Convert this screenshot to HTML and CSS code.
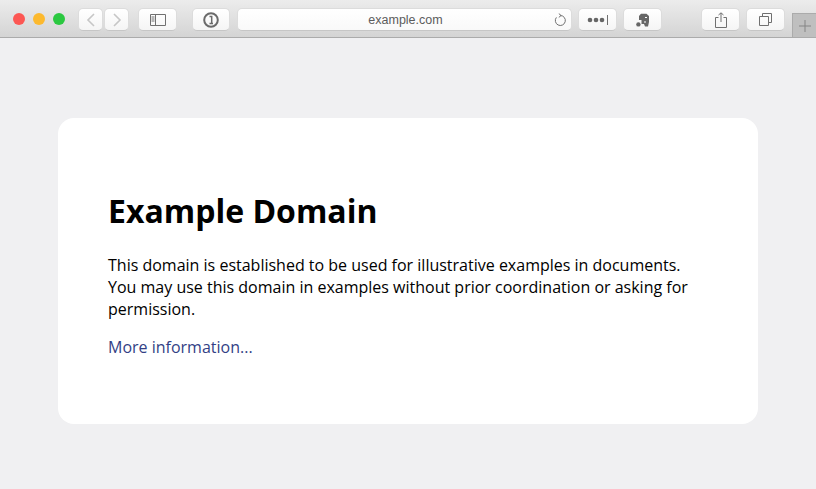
FILE: index.html
```html
<!DOCTYPE html>
<html lang="en">
<head>
  <meta charset="UTF-8" />
  <title>Example Domain</title>
  <link rel="stylesheet" href="styles.css">
</head>
<body>
  <header class="toolbar">
    <div class="lights">
      <span class="light red"></span>
      <span class="light yellow"></span>
      <span class="light green"></span>
    </div>

    <div class="nav-pair">
      <button class="tool nav-btn" type="button" aria-label="Back">
        <svg width="10" height="16" viewBox="0 0 10 16"><path d="M8 2 2 8l6 6" class="faint"/></svg>
      </button>
      <button class="tool nav-btn" type="button" aria-label="Forward">
        <svg width="10" height="16" viewBox="0 0 10 16"><path d="m2 2 6 6-6 6" class="faint"/></svg>
      </button>
    </div>

    <button class="tool sidebar-btn" type="button" aria-label="Sidebar">
      <svg width="16" height="12" viewBox="0 0 16 12"><path d="M.5.5h15v11H.5zM5.5.5v11M1.5 3h3M1.5 5h3M1.5 7h3" class="line"/></svg>
    </button>

    <button class="tool key-btn" type="button" aria-label="Password manager">
      <svg width="16" height="16" viewBox="0 0 16 16"><circle cx="8" cy="8" r="6.8" class="thick"/><path d="M6.5 4.5h2.2v7M6.5 11.5h3.5" class="mid"/></svg>
    </button>

    <div class="address">
      <span class="address-text">example.com</span>
      <svg class="reload" width="14" height="14" viewBox="0 0 14 14"><path d="M7.5 2.5A5 5 0 1 1 3.4 4.4" class="line"/><path d="M5.8.6l2.3 1.9-2.3 1.9" class="line"/></svg>
    </div>

    <button class="tool dots-btn" type="button" aria-label="Extensions">
      <svg width="22" height="10" viewBox="0 0 22 10"><circle cx="3" cy="5" r="2.3" class="fill"/><circle cx="9" cy="5" r="2.3" class="fill"/><circle cx="15" cy="5" r="2.3" class="fill"/><path d="M20.5 0v10" class="line"/></svg>
    </button>

    <button class="tool note-btn" type="button" aria-label="Evernote">
      <svg width="14" height="14" viewBox="0 0 14 14"><path d="M3 3 5 .8h5.5L13 3v6l-1 4.4H9L8 11H5.5V7H3z" class="fill"/><path d="M9 4.5h2M8 9h2" class="cut"/><circle cx="2.4" cy="11.4" r="2.2" class="fill"/></svg>
    </button>

    <button class="tool share-btn" type="button" aria-label="Share">
      <svg width="12" height="16" viewBox="0 0 12 16"><path d="M3.5 5.5H.5v10h11v-10h-3M6 10V1M3.5 3 6 .8 8.5 3" class="line"/></svg>
    </button>

    <button class="tool tabs-btn" type="button" aria-label="Show tabs">
      <svg width="13" height="13" viewBox="0 0 13 13"><path d="M.5 3.5h9v9h-9zM3.5 3.5v-3h9v9h-3" class="line"/></svg>
    </button>

    <div class="new-tab" aria-label="New tab">
      <svg width="12" height="12" viewBox="0 0 12 12"><path d="M6 0v12M0 6h12" class="plus"/></svg>
    </div>
  </header>

  <main class="page">
    <section class="card">
      <h1>Example Domain</h1>
      <p class="intro">This domain is established to be used for illustrative examples in documents. You may use this domain in examples without prior coordination or asking for permission.</p>
      <p><a href="#">More information...</a></p>
    </section>
  </main>
</body>
</html>
```

FILE: styles.css
```css
html, body {
  height: 100%;
}

body {
  margin: 0;
  display: flex;
  flex-direction: column;
  background: #f0f0f2;
  font-family: "Open Sans", sans-serif;
  overflow: hidden;
}

/* Browser toolbar */
.toolbar {
  display: flex;
  align-items: flex-start;
  height: 29px;
  padding: 8px 0 0 13px;
  position: relative;
  background: linear-gradient(#ececec, #d4d4d4);
  border-bottom: 1px solid #ababab;
  flex-shrink: 0;
}

.lights {
  display: flex;
  gap: 8px;
  margin-top: 5px;
}

.light {
  width: 12px;
  height: 12px;
  border-radius: 50%;
}

.red { background: #fc5753; }
.yellow { background: #fcb92e; }
.green { background: #2bc840; }

.tool {
  height: 23px;
  padding: 0;
  display: flex;
  align-items: center;
  justify-content: center;
  background: linear-gradient(#ffffff, #f5f5f5);
  border: 1px solid #dcdcdc;
  border-bottom-color: #c6c6c6;
  border-radius: 5px;
  box-sizing: border-box;
}

.nav-pair {
  display: flex;
  gap: 1px;
  margin-left: 13px;
}

.nav-btn { width: 25px; }
.sidebar-btn { width: 39px; margin-left: 9px; }
.key-btn { width: 38px; margin-left: 15px; }
.dots-btn { width: 39px; margin-left: 6px; }
.note-btn { width: 39px; margin-left: 6px; }
.share-btn { width: 39px; margin-left: 39px; }
.tabs-btn { width: 39px; margin-left: 6px; }

.address {
  width: 335px;
  height: 23px;
  margin-left: 7px;
  padding-left: 2px;
  display: flex;
  align-items: center;
  justify-content: center;
  position: relative;
  background: linear-gradient(#ffffff, #f9f9f9);
  border: 1px solid #dcdcdc;
  border-bottom-color: #c6c6c6;
  border-radius: 5px;
  box-sizing: border-box;
}

.address-text {
  font-family: "Liberation Sans", sans-serif;
  font-size: 12.5px;
  color: #5c5c5c;
}

.reload {
  position: absolute;
  right: 4px;
  top: 4px;
}

.new-tab {
  position: absolute;
  right: 0;
  bottom: 0;
  width: 24px;
  height: 24px;
  display: flex;
  align-items: center;
  justify-content: center;
  background: #bfbfbf;
  border-left: 1px solid #ababab;
  border-top: 1px solid #ababab;
  box-sizing: border-box;
}

svg path, svg circle {
  fill: none;
}

.line {
  stroke: #707070;
  stroke-width: 1;
}

.faint {
  stroke: #c6c6c6;
  stroke-width: 1.6;
}

.thick {
  stroke: #6a6a6a;
  stroke-width: 2;
}

.mid {
  stroke: #6a6a6a;
  stroke-width: 1.5;
}

.plus {
  stroke: #858585;
  stroke-width: 1;
}

.cut {
  stroke: #fff;
  stroke-width: 1;
}

svg .fill {
  fill: #666;
}

/* Page content */
.page {
  flex: 1;
  display: flex;
  justify-content: center;
  padding-top: 80px;
}

.card {
  width: 700px;
  height: 306px;
  padding: 50px;
  box-sizing: border-box;
  background: #fff;
  border-radius: 16px;
}

h1 {
  margin: 21px 0 0;
  font-size: 32px;
  font-weight: 700;
  line-height: 44px;
  color: #000;
}

p {
  margin: 16px 0 0;
  font-size: 16px;
  line-height: 22px;
  color: #000;
}

.intro {
  margin-top: 21px;
}

a {
  color: #333f85;
  text-decoration: none;
}
```
